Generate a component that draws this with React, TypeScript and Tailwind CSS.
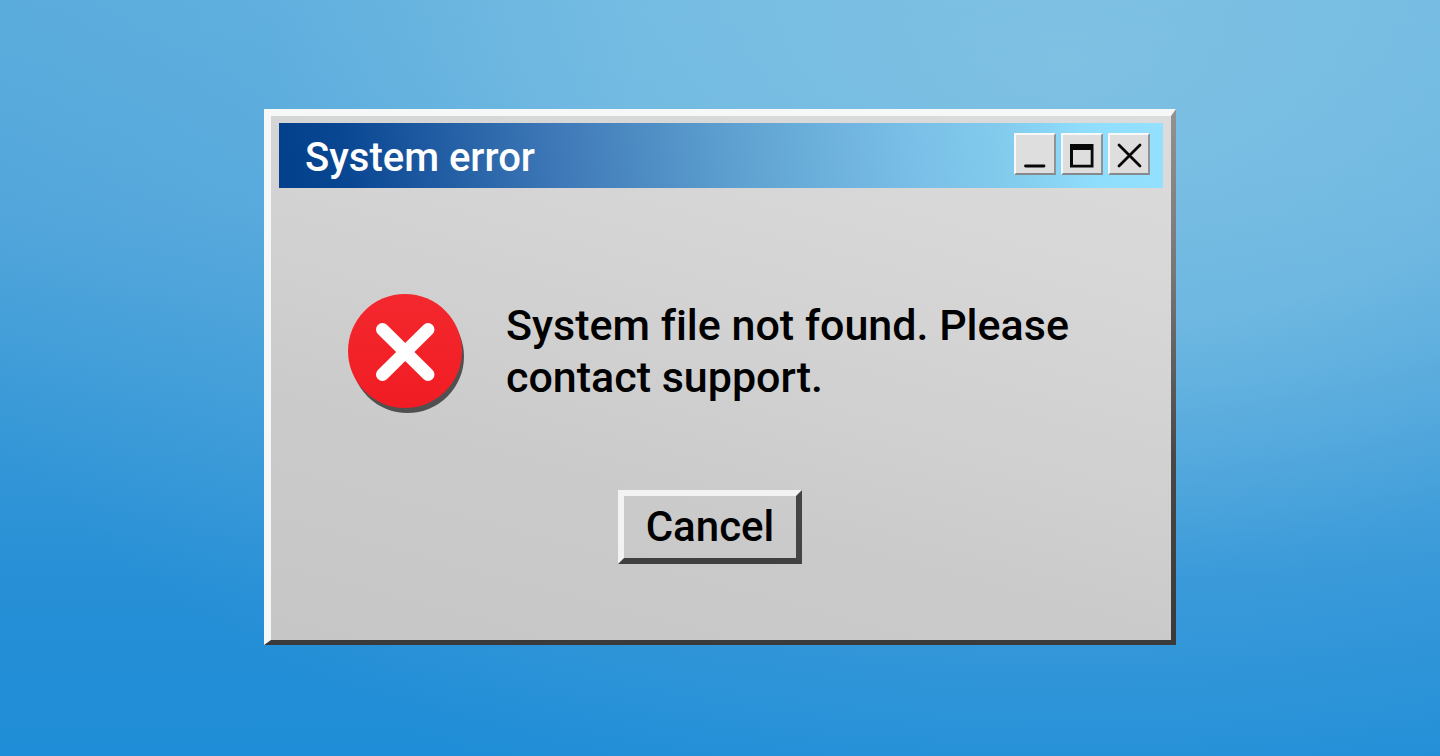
import React from 'react';

interface WindowButtonProps {
  label: string;
  children: React.ReactNode;
}

const WindowButton: React.FC<WindowButtonProps> = ({ label, children }) => (
  <button
    type="button"
    aria-label={label}
    className="flex h-[42px] w-[42px] items-center justify-center border-2 border-t-[#f8f8f8] border-r-[#8f9395] border-b-[#85898b] border-l-[#f8f8f8] bg-[#dedede]"
  >
    {children}
  </button>
);

const TitleBar: React.FC<{ title: string }> = ({ title }) => (
  <header className="flex h-[65px] items-center justify-between bg-[linear-gradient(82deg,#02408c_0%,#0a4793_8%,#3f79b8_32%,#5fa2d1_52%,#78bde6_70%,#84cdee_83%,#90defd_92%,#94e0fe_100%)] pr-[13px] pl-[26px]">
    <h1 id="error-title" className="pt-1 text-[40px] leading-[48px] font-medium text-white">
      {title}
    </h1>
    <div className="flex gap-[5px] pb-1">
      <WindowButton label="Minimize">
        <svg width="38" height="38" viewBox="0 0 38 38" fill="none" stroke="#080808">
          <path d="M9.5 31H28" strokeWidth="2.800" strokeLinecap="round" />
        </svg>
      </WindowButton>
      <WindowButton label="Maximize">
        <svg width="38" height="38" viewBox="0 0 38 38">
          <path d="M7 9H30.500V32.500H7ZM10 15V29.700H27.700V15Z" fill="#080808" fillRule="evenodd" />
        </svg>
      </WindowButton>
      <WindowButton label="Close">
        <svg width="38" height="38" viewBox="0 0 38 38" fill="none" stroke="#080808">
          <path d="M9 10L30 31M30 10L9 31" strokeWidth="2.800" strokeLinecap="round" />
        </svg>
      </WindowButton>
    </div>
  </header>
);

const ErrorIcon: React.FC = () => (
  <svg width="116" height="120" viewBox="0 0 116 120" className="shrink-0" aria-hidden="true">
    <defs>
      <linearGradient id="disc" x1="0" y1="0" x2="0" y2="1">
        <stop offset="0" stopColor="#f3282e" />
        <stop offset="1" stopColor="#f11c23" />
      </linearGradient>
    </defs>
    <circle cx="59.500" cy="62.500" r="56.500" fill="#505050" />
    <circle cx="57" cy="57" r="57" fill="url(#disc)" />
    <path d="M34.500 35.500L80 80.500M80 35.500L34.500 80.500" stroke="#fff" strokeWidth="13" strokeLinecap="round" />
  </svg>
);

export default function App() {
  return (
    <main className="flex min-h-screen items-center justify-center bg-[radial-gradient(ellipse_85%_105%_at_74%_8%,rgba(142,202,230,0.72)_0%,rgba(137,200,231,0.6)_35%,rgba(120,188,228,0.25)_65%,rgba(110,180,224,0)_100%),linear-gradient(180deg,#58abdc_0%,#4fa4da_28%,#3999d7_53%,#268fd6_78%,#1f8dd7_100%)] p-4 pb-[18px] font-['Roboto',sans-serif]">
      <section
        role="alertdialog"
        aria-labelledby="error-title"
        aria-describedby="error-message"
        className="relative w-full max-w-[912px] bg-[linear-gradient(180deg,#929292_0%,#777777_30%,#484848_65%,#3a3a3a_100%)] pt-[7px] pr-[5px] pb-[5px] pl-[7px]"
      >
        {/* Lit top and left edges, mitred into the dark ones */}
        <div className="pointer-events-none absolute inset-0 bg-[#f6f7f7] [clip-path:polygon(0_0,100%_0,calc(100%-5px)_7px,7px_7px,7px_calc(100%-5px),0_100%)]" />

        <div className="bg-[linear-gradient(195deg,#dcdcdc_0%,#d3d3d3_40%,#cacaca_70%,#c6c6c6_100%)]">
          <div className="px-2 pt-[7px]">
            <TitleBar title="System error" />
          </div>
          <div className="flex items-center gap-[42px] pt-[106px] pr-20 pl-[77px]">
            <ErrorIcon />
            <p id="error-message" className="pb-[6px] text-[43px] leading-[52px] font-medium text-black [font-variant-ligatures:none]">
              System file not found. Please contact support.
            </p>
          </div>
          <div className="flex justify-center pt-[76px] pr-[22px] pb-[76px]">
            <button
              type="button"
              className="h-[74px] w-[184px] border-6 border-t-[#f3f3f3] border-r-[#444444] border-b-[#404040] border-l-[#f3f3f3] text-[42px] leading-[52px] font-medium text-black"
            >
              Cancel
            </button>
          </div>
        </div>
      </section>
    </main>
  );
}
